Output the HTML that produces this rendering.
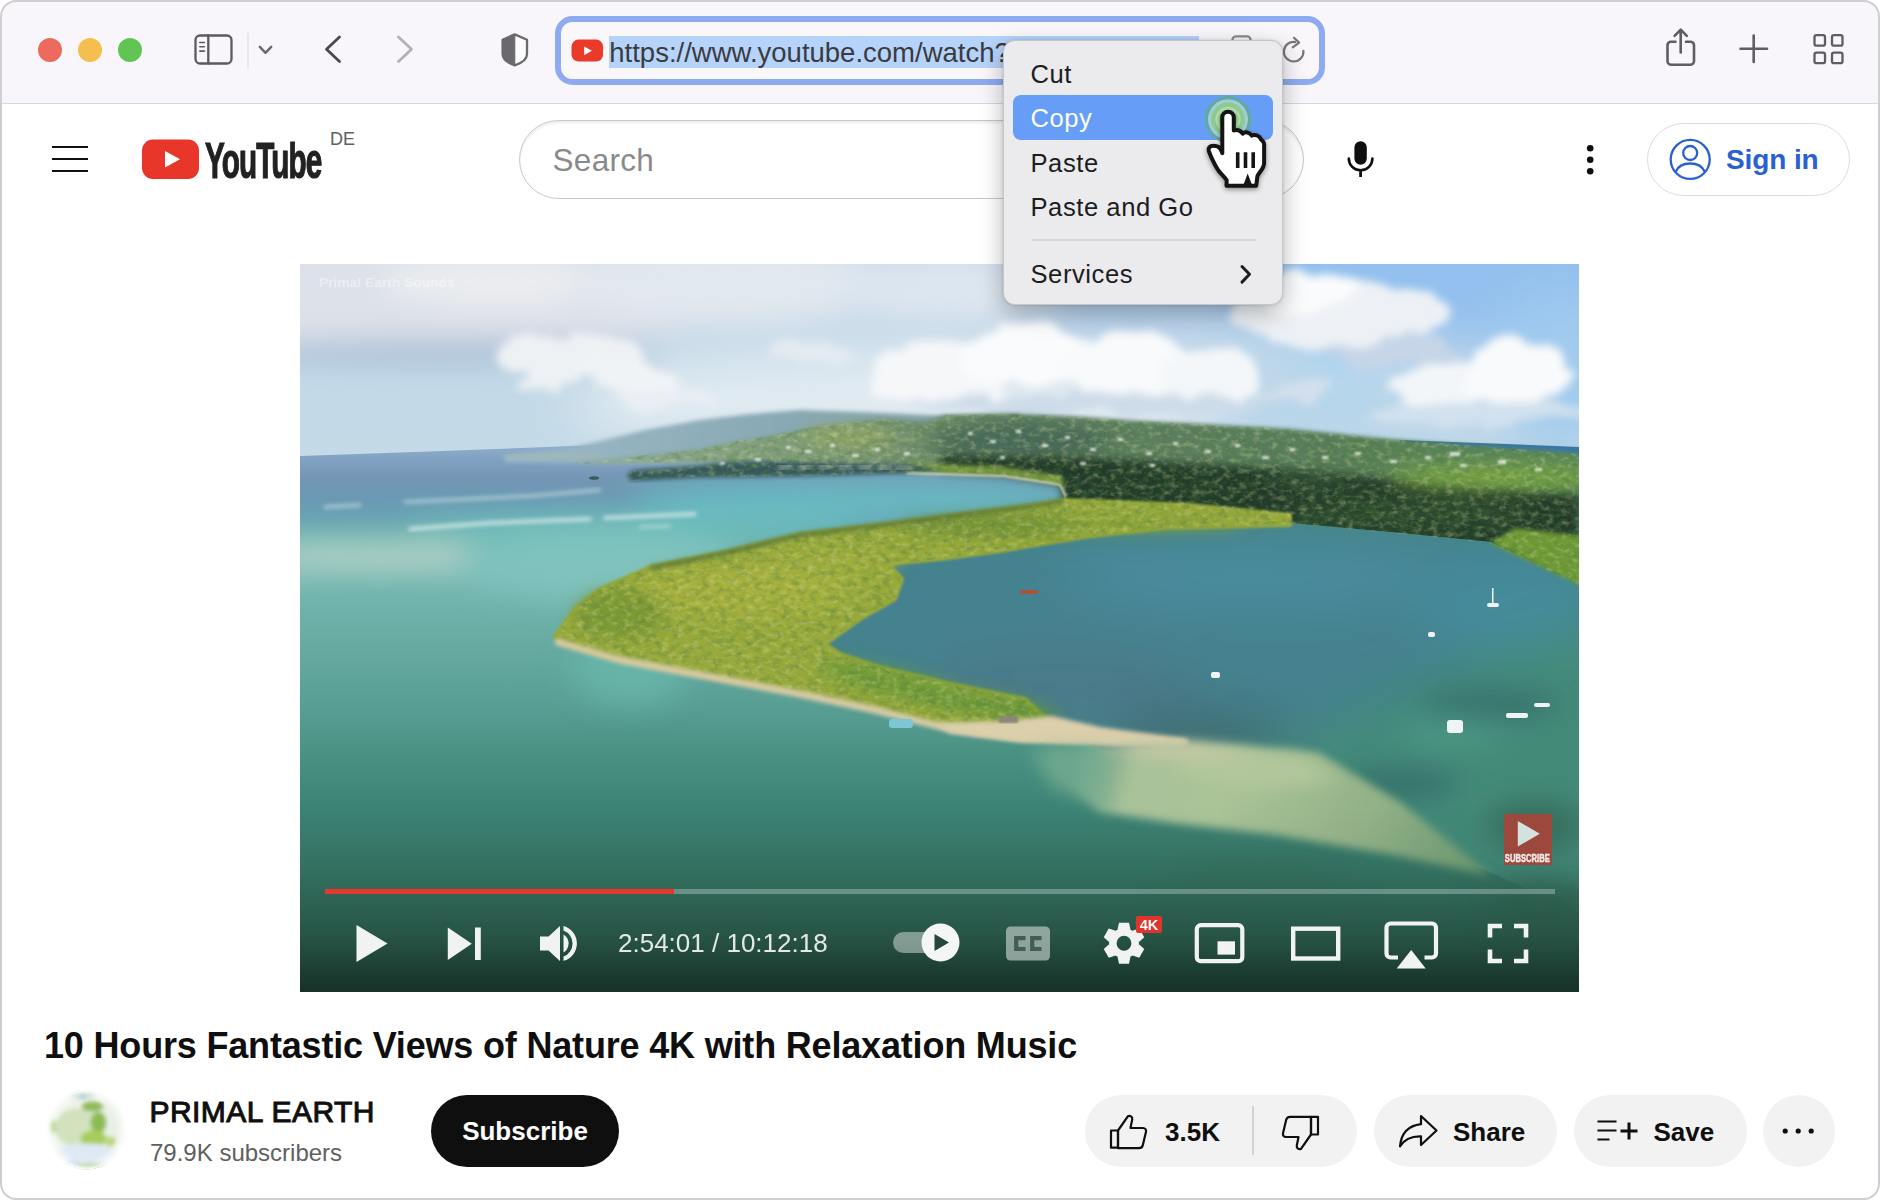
<!DOCTYPE html>
<html lang="en">
<head>
<meta charset="utf-8">
<title>YouTube – Safari</title>
<style>
*{box-sizing:border-box;margin:0;padding:0}
html,body{width:1880px;height:1200px;background:#fff;overflow:hidden}
body{font-family:"Liberation Sans",sans-serif;position:relative;color:#0f0f0f}
.abs{position:absolute}
#win{position:absolute;left:0;top:0;width:1880px;height:1200px;border-radius:17px;background:#fff;overflow:hidden}
#frame{position:absolute;left:0;top:0;width:1880px;height:1200px;border:2.200px solid #cfced0;border-radius:16.500px;pointer-events:none;z-index:50}
#toolbar{position:absolute;left:0;top:0;width:1880px;height:104px;background:#f8f6fa;border-bottom:1.200px solid #d9d7da}
.tl{position:absolute;top:38px;width:24px;height:24px;border-radius:50%}
svg{position:absolute;overflow:visible}
#urlbar{position:absolute;left:555px;top:16px;width:770px;height:69px;border:6.900px solid #8eabf2;border-radius:17.500px;background:#f9f7fa}
#sel{position:absolute;left:609px;top:35.5px;width:590px;height:32px;background:#b5d3fb}
#url{position:absolute;left:609.300px;top:35.500px;font-size:27.500px;line-height:34px;color:#3b3b3d;white-space:nowrap;letter-spacing:0}
/* yt header */
#ytlogo-text{position:absolute;left:205px;top:133px;font-weight:bold;font-size:49.5px;line-height:56px;color:#212121;-webkit-text-stroke:1.2px #212121;transform-origin:0 0;transform:scaleX(.6);letter-spacing:-1.5px;white-space:nowrap}
#de{position:absolute;left:330px;top:129px;font-size:18px;line-height:20px;color:#606060}
#search{position:absolute;left:519px;top:120px;width:785px;height:79px;border:1.5px solid #c8c8c8;border-radius:40px;background:#fff;box-shadow:inset 0 2px 3px rgba(0,0,0,.08)}
#search span{position:absolute;left:32.5px;top:19.5px;letter-spacing:.3px;font-size:31.5px;line-height:38px;color:#8a8a8a}
#signin{position:absolute;left:1647px;top:123px;width:203px;height:73px;border:1.5px solid #dcdcdc;border-radius:37px;background:#fff}
#signin span{position:absolute;left:78px;top:18px;font-size:28px;line-height:36px;font-weight:bold;color:#2a60d2;white-space:nowrap;letter-spacing:-.1px}
/* menu */
#menu{position:absolute;left:1003px;top:40px;width:280px;height:265px;border-radius:12px;background:#ebebed;border:1px solid #c6c6c8;box-shadow:0 8px 24px rgba(0,0,0,.28),0 0 3px rgba(0,0,0,.15)}
#menu .it{position:absolute;left:26.500px;font-size:25.600px;line-height:32px;letter-spacing:.55px;color:#1d1d1f;white-space:nowrap}
#menu .hl{position:absolute;left:9px;top:54px;width:260px;height:45px;border-radius:8px;background:#659df7}
#menu .sep{position:absolute;left:28px;top:198px;width:224px;height:2px;background:#d4d4d4}
/* video */
#video{position:absolute;left:300px;top:264px;width:1279.300px;height:727.700px;overflow:hidden;background:#2c5f50}
#wm{position:absolute;left:19px;top:11px;font-size:13.600px;font-weight:bold;color:rgba(255,255,255,.42);letter-spacing:.1px;white-space:nowrap}
#time{position:absolute;left:318px;top:663px;font-size:26px;line-height:32px;color:#e4e8e6;white-space:nowrap}
/* bottom */
#title{position:absolute;left:44px;top:1024px;letter-spacing:-.18px;font-size:36px;line-height:44px;font-weight:bold;color:#0f0f0f;white-space:nowrap}
#chan{position:absolute;left:149.5px;top:1092.5px;letter-spacing:.45px;font-size:30px;line-height:38px;color:#0f0f0f;white-space:nowrap;-webkit-text-stroke:1px #0f0f0f}
#subs{position:absolute;left:150px;top:1138px;font-size:24px;line-height:30px;color:#606060;white-space:nowrap}
#subbtn{position:absolute;left:431px;top:1095px;width:188px;height:72px;border-radius:36px;background:#0f0f0f;color:#fff;font-weight:bold;font-size:26px;line-height:72px;text-align:center}
.pill{position:absolute;top:1095px;height:72px;border-radius:36px;background:#f2f2f2}
.pill span{position:absolute;top:20px;font-size:26px;line-height:34px;font-weight:bold;color:#0f0f0f;white-space:nowrap}
</style>
</head>
<body>
<div id="win">
<div id="toolbar">
<div class="tl" style="left:38px;background:#ec6a5e"></div>
<div class="tl" style="left:78px;background:#f4bf4f"></div>
<div class="tl" style="left:118px;background:#61c554"></div>
<!-- sidebar icon -->
<svg style="left:190px;top:30px" width="50" height="40" viewBox="190 30 50 40" fill="none" stroke="#5c5a5e" stroke-width="2.3" stroke-linecap="round" stroke-linejoin="round">
<rect x="195.5" y="35.5" width="36" height="28" rx="4.5"/><path d="M208.3 35.5V63.5"/><path d="M199.8 42.5h4.6M199.8 46.8h4.6M199.8 51.1h4.6" stroke-width="1.6"/></svg>
<div class="abs" style="left:247px;top:33px;width:1.5px;height:35px;background:#eae8eb"></div>
<svg style="left:255px;top:40px" width="22" height="20" viewBox="255 40 22 20" fill="none" stroke="#6a686c" stroke-width="2.4" stroke-linecap="round" stroke-linejoin="round"><path d="M259.8 46.8l5.7 6 5.7-6"/></svg>
<!-- back / forward -->
<svg style="left:320px;top:30px" width="100" height="40" viewBox="320 30 100 40" fill="none" stroke-width="2.8" stroke-linecap="round" stroke-linejoin="round"><path d="M339.5 37L326.5 49.3l13 12.3" stroke="#4b494d"/><path d="M398.5 37l13 12.3-13 12.3" stroke="#b3b1b5"/></svg>
<!-- shield -->
<svg style="left:498px;top:30px" width="34" height="40" viewBox="498 30 34 40"><path d="M514.800 34.400L527 39.700V54C527 59.500 521.800 63 514.800 65.300C507.800 63 502.600 59.500 502.600 54V39.700Z" fill="#fdfcfd" stroke="#6b696d" stroke-width="2.300" stroke-linejoin="round"/><path d="M514.800 34.400V65.300C507.800 63 502.600 59.500 502.600 54V39.700Z" fill="#6b696d" stroke="#6b696d" stroke-width="1" stroke-linejoin="round"/></svg>
<!-- url bar -->
<div id="urlbar"></div>
<svg style="left:571px;top:38px" width="33" height="25" viewBox="0 0 33 25"><rect x=".500" y="1.600" width="31.600" height="22" rx="7" fill="#e93a2a"/><path d="M13.200 8.400v8.800l7.700-4.400z" fill="#fff"/></svg>
<div id="sel"></div>
<div id="url">https://www.youtube.com/watch?v=Qj1vW3VzLmk</div>
<!-- hidden reader icon + reload -->
<svg style="left:1228px;top:30px" width="30" height="20" viewBox="1228 30 30 20" fill="none" stroke="#8a888d" stroke-width="2.200"><rect x="1232.500" y="36.300" width="18" height="16" rx="3.500"/></svg>
<svg style="left:1278px;top:32px" width="32" height="34" viewBox="1278 32 32 34" fill="none" stroke="#78767b" stroke-width="2.200" stroke-linecap="round" stroke-linejoin="round"><path d="M1303.400 50.800A9.800 9.800 0 1 1 1295.300 42.050"/><path d="M1294 37.700L1299.100 42.600L1292.800 47.400"/></svg>
<!-- share, plus, grid -->
<svg style="left:1660px;top:25px" width="190" height="45" viewBox="1660 25 190 45" fill="none" stroke="#5f5d61" stroke-width="2.600" stroke-linecap="round" stroke-linejoin="round">
<path d="M1675.500 41.700h-4.500a3.500 3.500 0 0 0-3.500 3.500v16a3.500 3.500 0 0 0 3.500 3.500h19.500a3.500 3.500 0 0 0 3.500-3.500v-16a3.500 3.500 0 0 0-3.500-3.500h-4.500"/><path d="M1680.700 52.500V30M1674.600 35.800l6.100-6.100 6.100 6.100"/>
<path d="M1740.500 48.800h26.500M1753.700 35.500v26.500"/>
<g stroke-width="2.300"><rect x="1814.500" y="35.200" width="10.500" height="10.500" rx="2"/><rect x="1832" y="35.200" width="10.500" height="10.500" rx="2"/><rect x="1814.500" y="52.700" width="10.500" height="10.500" rx="2"/><rect x="1832" y="52.700" width="10.500" height="10.500" rx="2"/></g>
</svg>
</div>
<!-- hamburger -->
<div class="abs" style="left:52px;top:145.500px;width:36px;height:2.200px;background:#0f0f0f"></div>
<div class="abs" style="left:52px;top:157.500px;width:36px;height:2.200px;background:#0f0f0f"></div>
<div class="abs" style="left:52px;top:169.500px;width:36px;height:2.200px;background:#0f0f0f"></div>
<!-- logo -->
<svg style="left:142px;top:139px" width="58" height="41" viewBox="0 0 58 41"><rect x="0" y="0.500" width="57" height="39.500" rx="11" fill="#e9362a"/><path d="M23 12v16.500l15-8.250z" fill="#fff"/></svg>
<div id="ytlogo-text">YouTube</div>
<div id="de">DE</div>
<div id="search"><span>Search</span></div>
<!-- mic -->
<svg style="left:1340px;top:135px" width="42" height="48" viewBox="1340 135 42 48" fill="none" stroke="#0f0f0f" stroke-linecap="round"><rect x="1354.400" y="141.300" width="12.400" height="23.500" rx="6.200" fill="#0f0f0f" stroke="none"/><path d="M1348.800 158.500a11.800 11.800 0 0 0 23.600 0" stroke-width="2.600"/><path d="M1360.600 170.500v6.500" stroke-width="2.800" stroke-linecap="butt"/></svg>
<!-- dots -->
<svg style="left:1580px;top:140px" width="20" height="40" viewBox="1580 140 20 40" fill="#0f0f0f"><circle cx="1590.200" cy="148.300" r="3.300"/><circle cx="1590.200" cy="159.700" r="3.300"/><circle cx="1590.200" cy="171.200" r="3.300"/></svg>
<div id="signin"><span>Sign in</span></div>
<svg style="left:1665px;top:135px" width="50" height="50" viewBox="1665 135 50 50" fill="none" stroke="#2a60d2" stroke-width="2.300"><circle cx="1690.200" cy="159.400" r="19.500"/><circle cx="1690.200" cy="153" r="7"/><path d="M1675.500 172c2.500-6 8-8.500 14.700-8.500s12.200 2.500 14.700 8.500"/></svg>

<div id="video">
<svg style="left:0;top:0" width="1280" height="728" viewBox="0 0 1280 728" preserveAspectRatio="none">
<defs>
<linearGradient id="gsky" x1="0" y1="0" x2="0" y2="1"><stop offset="0" stop-color="#c9d8ea"/><stop offset=".5" stop-color="#c3d9e8"/><stop offset="1" stop-color="#c4dae7"/></linearGradient>
<linearGradient id="gsea" gradientUnits="userSpaceOnUse" x1="0" y1="180" x2="0" y2="728">
<stop offset="0" stop-color="#8eaecd"/><stop offset=".035" stop-color="#7f9fc0"/><stop offset=".065" stop-color="#7396b5"/><stop offset=".1" stop-color="#6b99b3"/><stop offset=".135" stop-color="#69a3b3"/><stop offset=".17" stop-color="#70b3b0"/><stop offset=".25" stop-color="#76b8b2"/><stop offset=".3" stop-color="#6fb2ab"/><stop offset=".38" stop-color="#65a9a0"/><stop offset=".47" stop-color="#5a9f95"/><stop offset=".56" stop-color="#4b9284"/><stop offset=".65" stop-color="#3e8577"/><stop offset=".78" stop-color="#367565"/><stop offset="1" stop-color="#35705a"/></linearGradient>
<linearGradient id="gfar" x1="0" y1="0" x2="1" y2="0"><stop offset="0" stop-color="#9db9c6"/><stop offset=".5" stop-color="#8aaab6"/><stop offset="1" stop-color="#7d9f9c"/></linearGradient>
<linearGradient id="gmain" gradientUnits="userSpaceOnUse" x1="275" y1="0" x2="1279" y2="0"><stop offset="0" stop-color="#8cab93"/><stop offset=".25" stop-color="#7d9a76"/><stop offset=".45" stop-color="#5f8062"/><stop offset=".75" stop-color="#587d5a"/><stop offset="1" stop-color="#5a8756"/></linearGradient>
<linearGradient id="gctl" x1="0" y1="0" x2="0" y2="1"><stop offset="0" stop-color="#000" stop-opacity="0"/><stop offset=".35" stop-color="#000" stop-opacity=".04"/><stop offset=".7" stop-color="#000" stop-opacity=".26"/><stop offset="1" stop-color="#000" stop-opacity=".56"/></linearGradient>
<filter id="b1" x="-10%" y="-10%" width="120%" height="120%"><feGaussianBlur stdDeviation=".8"/></filter>
<filter id="b2" x="-10%" y="-10%" width="120%" height="120%"><feGaussianBlur stdDeviation="2"/></filter>
<filter id="b4" x="-10%" y="-10%" width="120%" height="120%"><feGaussianBlur stdDeviation="4"/></filter>
<filter id="b8" x="-20%" y="-20%" width="140%" height="140%"><feGaussianBlur stdDeviation="8"/></filter>
<filter id="b14" x="-30%" y="-30%" width="160%" height="160%"><feGaussianBlur stdDeviation="14"/></filter>
<filter id="b25" x="-40%" y="-40%" width="180%" height="180%"><feGaussianBlur stdDeviation="25"/></filter>
<filter id="texd" x="0" y="0" width="100%" height="100%"><feTurbulence type="fractalNoise" baseFrequency=".11 .16" numOctaves="3" seed="7"/><feColorMatrix type="matrix" values="0 0 0 0 0.08  0 0 0 0 0.2  0 0 0 0 0.05  2.6 0 0 0 -1.15"/></filter>
<filter id="texl" x="0" y="0" width="100%" height="100%"><feTurbulence type="fractalNoise" baseFrequency=".13 .19" numOctaves="3" seed="23"/><feColorMatrix type="matrix" values="0 0 0 0 0.8  0 0 0 0 0.82  0 0 0 0 0.4  0 2.4 0 0 -1.12"/></filter>
<filter id="cl" x="-20%" y="-30%" width="140%" height="160%"><feTurbulence type="fractalNoise" baseFrequency=".022 .035" numOctaves="3" seed="11" result="n"/><feDisplacementMap in="SourceGraphic" in2="n" scale="34" xChannelSelector="R" yChannelSelector="G"/><feGaussianBlur stdDeviation="4.500"/></filter>
<clipPath id="vclip"><rect width="1280" height="728"/></clipPath>
</defs>
<g clip-path="url(#vclip)">
<!-- SKY -->
<rect width="1282" height="200" fill="url(#gsky)"/>
<g filter="url(#b25)">
<ellipse cx="1150" cy="5" rx="300" ry="75" fill="#93c0ee"/>
<ellipse cx="1260" cy="110" rx="70" ry="80" fill="#a2cbee"/>
<ellipse cx="820" cy="35" rx="110" ry="35" fill="#aecdec"/>
<ellipse cx="1020" cy="150" rx="220" ry="22" fill="#b4d3ea"/>
<ellipse cx="600" cy="140" rx="330" ry="55" fill="#e0eaf1"/>
<ellipse cx="1040" cy="100" rx="45" ry="28" fill="#b4d8ee"/>
</g>
<!-- clouds -->
<g filter="url(#b14)">
<ellipse cx="150" cy="30" rx="270" ry="62" fill="#dde1e9"/>
<ellipse cx="200" cy="18" rx="120" ry="22" fill="#ebedf0"/>
<ellipse cx="430" cy="20" rx="160" ry="40" fill="#e2e8ef"/>
<ellipse cx="140" cy="88" rx="225" ry="12" fill="#a9bed5"/>
<ellipse cx="650" cy="25" rx="120" ry="30" fill="#dde6ef"/>
</g>
<g filter="url(#cl)">
<ellipse cx="270" cy="92" rx="75" ry="26" fill="#eef1f4"/>
<ellipse cx="330" cy="112" rx="50" ry="18" fill="#f0f3f6"/>
<ellipse cx="370" cy="136" rx="50" ry="10" fill="#e9eff4"/>
<ellipse cx="510" cy="92" rx="40" ry="12" fill="#e4ebf2"/>
<ellipse cx="640" cy="108" rx="75" ry="30" fill="#f5f7f9"/>
<ellipse cx="730" cy="92" rx="70" ry="32" fill="#fafbfc"/>
<ellipse cx="830" cy="100" rx="70" ry="34" fill="#f8fafb"/>
<ellipse cx="910" cy="112" rx="50" ry="26" fill="#f4f7f9"/>
<ellipse cx="780" cy="140" rx="180" ry="11" fill="#cddbe9"/>
<ellipse cx="1040" cy="52" rx="115" ry="34" fill="#edf1f5"/>
<ellipse cx="1010" cy="26" rx="45" ry="20" fill="#fafbfc"/>
<ellipse cx="1090" cy="88" rx="70" ry="13" fill="#c6d6e8"/>
<ellipse cx="1140" cy="122" rx="50" ry="24" fill="#f3f6f9"/>
<ellipse cx="1218" cy="108" rx="55" ry="32" fill="#f9fafb"/>
<ellipse cx="1180" cy="150" rx="115" ry="11" fill="#d2e1ee"/>
<ellipse cx="990" cy="128" rx="40" ry="10" fill="#d3e0ec"/>
</g>
<!-- SEA -->
<path d="M0 192Q150 187 300 181L700 175L1282 186V728H0Z" fill="url(#gsea)"/>
<path d="M1100 176L1282 183V194L1100 189Z" fill="#3574ab"/>
<g filter="url(#b14)">
<ellipse cx="560" cy="236" rx="230" ry="20" fill="#68b9c1"/>
<ellipse cx="330" cy="264" rx="230" ry="14" fill="#6cbcba"/>
<ellipse cx="80" cy="293" rx="200" ry="13" fill="#b8d4c9"/>
<ellipse cx="330" cy="400" rx="60" ry="40" fill="#66b3a8"/>
<ellipse cx="300" cy="300" rx="140" ry="34" fill="#80c2be"/>
</g>
<g filter="url(#b2)" stroke="#e4f1ef" stroke-linecap="round" fill="none">
<path d="M25 243L60 241M105 238L230 232L300 226" stroke-width="2.500" stroke-opacity=".7"/>
<path d="M110 265L190 259L290 255M305 254L395 250" stroke-width="3.500" stroke-opacity=".85"/>
<path d="M340 263L370 262" stroke-width="2.500" stroke-opacity=".6"/>
</g>
<!-- far hills -->
<path d="M205 191L270 184L300 177L345 166L400 156L450 150L500 146L560 148L650 152L720 150L720 205L205 198Z" fill="url(#gfar)" filter="url(#b2)"/>
<!-- mainland -->
<path d="M275 199L330 193L400 185L442 176L470 172L519 162L581 155L627 158L645 151L715 150L780 153L840 157L920 161L990 165L1090 175L1140 179L1280 190V340H740L764 234L760 220L705 211.500L640 207L612 202L473 198L430 198L330 198.500L275 200Z" fill="url(#gmain)" filter="url(#b2)"/>
<g filter="url(#b8)">
<ellipse cx="550" cy="173" rx="45" ry="9" fill="#95a868"/>
<ellipse cx="720" cy="176" rx="90" ry="16" fill="#46685a"/>
<ellipse cx="1190" cy="200" rx="110" ry="8" fill="#628d58"/>
</g>
<!-- dark forest -->
<path d="M640 190L700 192L780 193L860 198L950 203L1040 210L1100 216L1160 221L1280 230V300H740L764 234L760 220L705 211L640 207Z" fill="#213a2b" filter="url(#b4)"/>
<g filter="url(#b8)">
<ellipse cx="1195" cy="214" rx="105" ry="10" fill="#7aa640"/>
<ellipse cx="1010" cy="216" rx="40" ry="5" fill="#36563a"/>
<ellipse cx="860" cy="222" rx="90" ry="10" fill="#223c2c"/>
<ellipse cx="1110" cy="250" rx="120" ry="14" fill="#2a4a2e"/>
</g>
<!-- strip above bay beach -->
<path d="M610 199L700 203L762 212L764 222L704 211L606 208Z" fill="#7a9c3c" filter="url(#b2)"/>
<!-- dark headland in bay -->
<path d="M327 210L334 206L396 202L427 198L473 197L612 201L645 206L606 209.500L488 212.500L396 213.500L331 217Z" fill="#34585a" filter="url(#b2)"/>
<path d="M478 203L540 202L612 205" stroke="#9eaaa8" stroke-width="5" fill="none" filter="url(#b2)" stroke-opacity=".75" stroke-dasharray="14 6"/>
<ellipse cx="294" cy="214" rx="5" ry="1.800" fill="#3a5a5c"/>
<path d="M205 192L260 191L300 193" stroke="#a4b8ad" stroke-width="3" fill="none" filter="url(#b2)"/>
<path d="M606 209L704 212L760 220.500L766 233" stroke="#e6dfc4" stroke-width="2.200" fill="none" filter="url(#b1)" stroke-opacity=".9"/>
<!-- lagoon -->
<clipPath id="lagclip"><path d="M560 310L640 290L700 284L790 270L865 262L990 259L1090 268L1190 278L1282 320V650L1185 606L1000 540L750 470L725 435L650 420L575 402L540 390L525 380L560 355L595 335Z"/></clipPath>
<g clip-path="url(#lagclip)">
<rect x="500" y="250" width="800" height="420" fill="#448a79"/>
<g filter="url(#b25)">
<path d="M500 250H1300V350L1120 420L1010 470L860 500L700 470L500 400Z" fill="#45828f"/>
<ellipse cx="760" cy="420" rx="140" ry="40" fill="#4b7a8a"/>
<ellipse cx="1210" cy="340" rx="90" ry="45" fill="#458b9b"/>
<ellipse cx="900" cy="470" rx="90" ry="24" fill="#3f6a70"/>
<ellipse cx="950" cy="312" rx="190" ry="30" fill="#4b8c9f"/>
</g>
<g filter="url(#b14)">
<ellipse cx="1190" cy="440" rx="70" ry="13" fill="#356f6c"/>
<ellipse cx="1100" cy="520" rx="60" ry="15" fill="#35706a"/>
<ellipse cx="1235" cy="560" rx="50" ry="26" fill="#377160"/>
<ellipse cx="1150" cy="470" rx="50" ry="11" fill="#4f9a88"/>
</g>
</g>
<g filter="url(#b14)"><ellipse cx="960" cy="612" rx="100" ry="12" fill="#356f5d"/><ellipse cx="1240" cy="640" rx="60" ry="28" fill="#366e5c"/></g>
<!-- peninsula bright green -->
<path d="M1282 272L1215 264L1190 279L1282 322Z" fill="#6e9a35" filter="url(#b2)"/>
<path d="M990 251L890 241L764 236L740 240L600 258L500 270L425 288L350 303L300 325L275 345L255 372L262 380L320 396L400 411L500 429L575 444L650 463L750 471L760 470L750 458L725 435L650 420L575 402L540 390L525 380L560 355L595 335L602 315L588 300L640 295L700 287L790 272L865 264L990 261Z" fill="#97a93a" stroke="#97a93a" stroke-width="4" stroke-linejoin="round" filter="url(#b1)"/>
<g filter="url(#b8)">
<ellipse cx="440" cy="328" rx="110" ry="26" fill="#a5b03d"/>
<ellipse cx="320" cy="350" rx="45" ry="24" fill="#7d9a35"/>
<ellipse cx="520" cy="298" rx="80" ry="12" fill="#a0ad3c"/>
<ellipse cx="610" cy="424" rx="95" ry="13" fill="#6d9a38" transform="rotate(14 610 424)"/>
<ellipse cx="705" cy="444" rx="55" ry="10" fill="#659538" transform="rotate(12 705 444)"/>
<ellipse cx="800" cy="258" rx="150" ry="7" fill="#89a238"/>
<ellipse cx="690" cy="262" rx="90" ry="7" fill="#668a36"/>
</g>
<clipPath id="landclip"><path d="M990 251L890 241L764 236L740 240L600 258L500 270L425 288L350 303L300 325L275 345L255 372L262 380L320 396L400 411L500 429L575 444L650 463L750 471L760 470L750 458L725 435L650 420L575 402L540 390L525 380L560 355L595 335L602 315L588 300L640 295L700 287L790 272L865 264L990 261Z"/><path d="M275 199L330 193L400 185L442 176L470 172L519 162L581 155L627 158L645 151L715 150L780 153L840 157L920 161L990 165L1090 175L1140 179L1280 190V322L1190 279L1090 269L990 260L990 251L890 241L764 236L764 234L760 220L705 211.500L640 207L612 202L473 198L430 198L330 198.500L275 200Z"/><path d="M327 210L334 206L396 202L427 198L473 197L612 201L645 206L606 209.500L488 212.500L396 213.500L331 217Z"/></clipPath>
<g clip-path="url(#landclip)"><rect x="250" y="140" width="1030" height="340" filter="url(#texd)" opacity=".42"/><rect x="250" y="140" width="1030" height="340" filter="url(#texl)" opacity=".32"/></g>
<!-- houses -->
<g fill="#e9ece6" opacity=".85" filter="url(#b1)">
<rect x="486" y="182" width="5" height="3"/><rect x="505" y="186" width="6" height="3"/><rect x="530" y="180" width="5" height="3"/><rect x="552" y="190" width="7" height="3"/><rect x="575" y="184" width="5" height="3"/><rect x="604" y="188" width="6" height="3"/><rect x="455" y="194" width="6" height="3"/><rect x="420" y="198" width="5" height="2.500"/>
<rect x="668" y="168" width="5" height="3"/><rect x="690" y="176" width="6" height="3"/><rect x="716" y="166" width="5" height="3"/><rect x="742" y="180" width="6" height="3"/><rect x="765" y="172" width="5" height="3"/><rect x="790" y="184" width="6" height="3"/><rect x="818" y="174" width="5" height="3"/><rect x="846" y="188" width="6" height="3"/><rect x="873" y="178" width="5" height="3"/><rect x="905" y="186" width="6" height="3"/><rect x="935" y="180" width="5" height="3"/><rect x="962" y="192" width="7" height="3"/><rect x="990" y="184" width="5" height="3"/><rect x="1022" y="192" width="6" height="3"/><rect x="1055" y="188" width="6" height="3"/><rect x="1090" y="196" width="7" height="3"/><rect x="1125" y="192" width="6" height="3"/><rect x="1160" y="200" width="7" height="3"/><rect x="1198" y="196" width="8" height="4"/><rect x="1235" y="204" width="7" height="3"/><rect x="1150" y="188" width="10" height="4"/><rect x="700" y="192" width="5" height="3"/><rect x="780" y="198" width="6" height="3"/><rect x="850" y="200" width="5" height="3"/>
</g>
<path d="M764 237L740 241L600 259L500 271L425 289L350 304" stroke="#4f6e3a" stroke-width="4.500" fill="none" filter="url(#b2)" stroke-opacity=".8"/>
<!-- beach -->
<path d="M258 378L320 396L400 411L500 430L575 446L650 465L720 474L800 476L885 480" stroke="#d8cba8" stroke-width="7" fill="none" stroke-linecap="round" filter="url(#b2)"/>
<path d="M636 459L700 457L752 452L800 463L888 475L884 482L800 481L720 478L650 469Z" fill="#dccfab" filter="url(#b2)"/>
<rect x="699" y="452" width="19" height="7" fill="#8d8676" filter="url(#b1)"/>
<!-- sandbar -->
<linearGradient id="gsand" gradientUnits="userSpaceOnUse" x1="780" y1="480" x2="1190" y2="610"><stop offset="0" stop-color="#a9c29a" stop-opacity=".15"/><stop offset=".14" stop-color="#a9c29a" stop-opacity="1"/><stop offset=".35" stop-color="#aac397"/><stop offset=".7" stop-color="#92b188"/><stop offset="1" stop-color="#6a9a70"/></linearGradient>
<path d="M748 482L890 478L1019 489L1100 538L1192 612L1100 592L977 571L881 560L800 548L752 510Z" fill="url(#gsand)" filter="url(#b4)"/>
<g filter="url(#b8)">
<path d="M730 486L800 482L810 546L750 524Z" fill="#7fb596" opacity=".55"/>
<path d="M880 484L1000 492L1040 518L950 526L880 510Z" fill="#b2c69b"/>
<path d="M790 480L890 481L960 488L860 492Z" fill="#d2cbaa"/>
</g>
<!-- boats -->
<g fill="#f0f3f3"><rect x="911" y="408" width="9" height="6" rx="2"/><rect x="1128" y="368" width="7" height="5" rx="2"/><rect x="1147" y="456" width="16" height="13" rx="3"/><rect x="1206" y="449" width="22" height="5" rx="2"/><rect x="1234" y="439" width="16" height="4" rx="2"/><rect x="1187" y="339" width="12" height="4" rx="2"/><rect x="1192" y="324" width="1.500" height="16"/></g>
<rect x="720" y="326" width="18" height="4" rx="1.500" fill="#a6523e"/>
<rect x="589" y="455" width="24" height="9" rx="3" fill="#7cc6d6"/>
<!-- controls gradient -->
<rect x="0" y="540" width="1282" height="188" fill="url(#gctl)"/>
</g>
</svg>
<div id="wm">Primal Earth Sounds</div>
<!-- subscribe watermark -->
<div class="abs" style="left:1203.500px;top:550px;width:48.500px;height:50.500px;background:#9d483d"></div>
<svg style="left:1203px;top:550px" width="50" height="50" viewBox="0 0 50 50"><path d="M14.800 7v25.500l22-12.750z" fill="#d3e2de"/><text x="24.300" y="48" font-family="Liberation Sans, sans-serif" font-weight="bold" font-size="11.500" fill="#f3e9e6" stroke="#f3e9e6" stroke-width=".5" text-anchor="middle" textLength="45" lengthAdjust="spacingAndGlyphs">SUBSCRIBE</text></svg>
<!-- progress -->
<div class="abs" style="left:25px;top:624.500px;width:1230px;height:5.500px;background:rgba(255,255,255,.28)"></div>
<div class="abs" style="left:25px;top:624.500px;width:349px;height:5.500px;background:#e8372c"></div>
<!-- left controls -->
<svg style="left:0;top:640px" width="1279" height="80" viewBox="300 904 1279 80">
<g fill="#f1f3f2">
<path d="M356.500 925v37l31-18.500z"/>
<path d="M447.800 927.500v32.500l24-16.250zM475 927.500h5.800v32.500h-5.800z"/>
<path d="M540 936.500h8.500l11.500-10.500v35l-11.500-10.500h-8.500z"/>
<path d="M563.500 934.500a10.500 10.500 0 0 1 0 18z"/>
<path d="M563.500 926.200v4.200a14 14 0 0 1 0 26.200v4.200a18 18 0 0 0 0-34.800z"/>
</g>
<!-- autoplay toggle -->
<rect x="893" y="932" width="58" height="21" rx="10.500" fill="#fff" fill-opacity=".42"/>
<circle cx="940.500" cy="942.500" r="19" fill="#f4f6f5"/>
<path d="M934.500 934v17l14.500-8.500z" fill="#24463c"/>
<!-- cc -->
<rect x="1006" y="926.500" width="44" height="34" rx="4.500" fill="#cfd6d3" fill-opacity=".62"/>
<g fill="none" stroke="#3f5f55" stroke-width="4.200"><path d="M1025.500 938.200h-9.300v10.800h9.300M1041.500 938.200h-9.300v10.800h9.300"/></g>
<!-- gear -->
<g transform="translate(1124 943.200)" fill="#f1f3f2">
<path id="tooth" d="M-5 -20.500h10l1.500 7h-13z"/>
<use href="#tooth" transform="rotate(60)"/><use href="#tooth" transform="rotate(120)"/><use href="#tooth" transform="rotate(180)"/><use href="#tooth" transform="rotate(240)"/><use href="#tooth" transform="rotate(300)"/>
<circle r="11.200" fill="none" stroke="#f1f3f2" stroke-width="7.500"/>
</g>
<rect x="1136" y="916" width="26" height="17" rx="2" fill="#e0352b"/>
<text x="1149" y="930" font-family="Liberation Sans, sans-serif" font-weight="bold" font-size="14.500" fill="#fff" text-anchor="middle">4K</text>
<!-- miniplayer -->
<rect x="1196.800" y="925.200" width="45.500" height="36" rx="4" fill="none" stroke="#f1f3f2" stroke-width="4.200"/>
<rect x="1217.500" y="941.300" width="17.500" height="13.300" fill="#f1f3f2"/>
<!-- theater -->
<rect x="1293.200" y="928.700" width="45" height="29.800" fill="none" stroke="#f1f3f2" stroke-width="4.400"/>
<!-- airplay -->
<path d="M1398 957.500h-7.500a4 4 0 0 1-4-4v-26a4 4 0 0 1 4-4h41.500a4 4 0 0 1 4 4v26a4 4 0 0 1-4 4h-7.500" fill="none" stroke="#f1f3f2" stroke-width="4.200"/>
<path d="M1411.200 950l14.500 18.500h-29z" fill="#f1f3f2"/>
<!-- fullscreen -->
<path d="M1490 937.500v-11.500h12M1514 926h12v11.500M1526 949.500v11.500h-12M1502 961h-12v-11.500" fill="none" stroke="#f1f3f2" stroke-width="4.600"/>
</svg>
<div id="time">2:54:01 / 10:12:18</div>

</div>

<div id="title">10 Hours Fantastic Views of Nature 4K with Relaxation Music</div>
<!-- avatar -->
<svg style="left:46px;top:1089px" width="81" height="81" viewBox="-40.500 -40.500 81 81">
<defs><clipPath id="avc"><circle r="40"/></clipPath><filter id="avb" x="-30%" y="-30%" width="160%" height="160%"><feGaussianBlur stdDeviation="2.200"/></filter>
<radialGradient id="avfade" cx="0" cy="0" r="40" gradientUnits="userSpaceOnUse"><stop offset="0" stop-color="#fff" stop-opacity="0"/><stop offset=".72" stop-color="#fff" stop-opacity="0"/><stop offset=".9" stop-color="#fff" stop-opacity=".55"/><stop offset="1" stop-color="#fff" stop-opacity="1"/></radialGradient></defs>
<g clip-path="url(#avc)"><circle r="40" fill="#eef3ea"/>
<g filter="url(#avb)">
<ellipse cx="-9" cy="-2" rx="23" ry="19" fill="#d2e2bd"/>
<ellipse cx="22" cy="-6" rx="14" ry="22" fill="#e9f0e6"/>
<ellipse cx="6" cy="-23" rx="11" ry="5" fill="#8fba58"/>
<ellipse cx="12" cy="-7" rx="8" ry="11" fill="#8dbb52"/>
<ellipse cx="7" cy="9" rx="13" ry="8" fill="#a8cd5c"/>
<ellipse cx="24" cy="12" rx="6" ry="5" fill="#b9d878"/>
<ellipse cx="-34" cy="-3" rx="3" ry="7" fill="#a0c566"/>
<ellipse cx="0" cy="24" rx="32" ry="10" fill="#dfe9f4"/>
<ellipse cx="-14" cy="34" rx="8" ry="3" fill="#a5c6e4"/>
<ellipse cx="5" cy="37" rx="17" ry="3.500" fill="#82b153"/>
<ellipse cx="-4" cy="-35" rx="13" ry="4" fill="#b5d2c2"/>
<ellipse cx="-4" cy="-34" rx="3" ry="2" fill="#5b96c6"/>
</g>
<circle r="40" fill="url(#avfade)"/>
</g></svg>
<div id="chan">PRIMAL EARTH</div>
<div id="subs">79.9K subscribers</div>
<div id="subbtn">Subscribe</div>
<!-- like/dislike -->
<div class="pill" style="left:1085px;width:272px"><span style="left:80px">3.5K</span><div class="abs" style="left:167px;top:11px;width:1.5px;height:49px;background:#d3d3d3"></div></div>
<svg style="left:1105px;top:1110px" width="45" height="45" viewBox="1105 1110 45 45" fill="none" stroke="#0f0f0f" stroke-width="2.200" stroke-linejoin="round"><path d="M1118 1130.500l10-14.300c1.800-1 4.800.3 4.200 3.300l-1.700 8.500h12.500c2.200 0 3.500 1.800 3 3.800l-3.200 13.400c-.5 2-2 3-4 3H1118z"/><path d="M1111 1130.500h7v17.200h-7z"/></svg>
<svg style="left:1278px;top:1110px" width="45" height="45" viewBox="1278 1110 45 45" fill="none" stroke="#0f0f0f" stroke-width="2.200" stroke-linejoin="round"><path d="M1311 1134.500l-10 14.300c-1.800 1-4.800-.3-4.200-3.300l1.700-8.500h-12.500c-2.200 0-3.500-1.800-3-3.800l3.200-13.400c.5-2 2-3 4-3H1311z"/><path d="M1311 1116.800h7v17.700h-7z"/></svg>
<!-- share -->
<div class="pill" style="left:1374px;width:183px"><span style="left:79px">Share</span></div>
<svg style="left:1395px;top:1110px" width="46" height="44" viewBox="1395 1110 46 44" fill="none" stroke="#0f0f0f" stroke-width="2.200" stroke-linejoin="round"><path d="M1421 1116l15.500 14.500-15.500 14.500v-8.600c-10-.3-16.500 2.700-21 10 1-11.500 7-20.500 21-22.200z"/></svg>
<!-- save -->
<div class="pill" style="left:1573.500px;width:173px"><span style="left:80px">Save</span></div>
<svg style="left:1595px;top:1112px" width="46" height="40" viewBox="1595 1112 46 40" fill="none" stroke="#0f0f0f" stroke-width="2.200"><path d="M1597.500 1121.500h19M1597.500 1130.500h19M1597.500 1139.500h12"/><path d="M1620.500 1131h17M1629 1122.500v17" stroke-width="3"/></svg>
<!-- more -->
<div class="pill" style="left:1762.500px;width:72px"></div>
<svg style="left:1780px;top:1125px" width="40" height="12" viewBox="1780 1125 40 12" fill="#0f0f0f"><circle cx="1785.200" cy="1131" r="2.600"/><circle cx="1798.200" cy="1131" r="2.600"/><circle cx="1811.200" cy="1131" r="2.600"/></svg>

<div id="menu">
<div class="hl"></div>
<div class="it" style="top:16.500px">Cut</div>
<div class="it" style="top:61px;color:#fff">Copy</div>
<div class="it" style="top:105.500px">Paste</div>
<div class="it" style="top:150px">Paste and Go</div>
<div class="sep"></div>
<div class="it" style="top:217px">Services</div>
<svg style="left:232px;top:220px" width="20" height="26" viewBox="0 0 20 26" fill="none" stroke="#1d1d1f" stroke-width="3" stroke-linecap="round" stroke-linejoin="round"><path d="M6 5.500l7.500 7.800-7.500 7.800"/></svg>
</div>
<!-- click indicator + hand cursor -->
<svg style="left:1195px;top:90px;z-index:60" width="90" height="110" viewBox="1195 90 90 110">
<circle cx="1228" cy="119.300" r="23.400" fill="#63a9a2"/>
<circle cx="1228" cy="119.300" r="20" fill="#a3cbd9"/>
<circle cx="1228" cy="119.300" r="16.800" fill="#8ccb8f"/>
<circle cx="1228" cy="119.300" r="12.600" fill="#b4dfae"/>
<circle cx="1228" cy="119.300" r="9.600" fill="#94cf86"/>
<g filter="drop-shadow(0 2px 2.500px rgba(0,0,0,.4))">
<path d="M1222.300 150V117.500a5.750 5.750 0 0 1 11.500 0V130.500c2.500-1.200 6.500-.5 8.900 3.200c2.200-2.400 6.800-1.600 9.200 2c2.600-1.800 7.600-.3 9 3.500c1.800 1.600 3.200 3 3.200 5V163.300c0 5.500-5 8.500-6.700 12.900l-1.200 9.600h-29.700l.2-5.500c-2-3.500-5-5.800-7.400-8.700c-2.800-3.400-4.600-7.300-6.400-11c-1.700-3.300-2.800-6.300-4.100-9.600c-.8-2 .3-4 2.200-4.800c2.200-.9 4.300-.4 6.300.200c2 .7 3.600 2.600 5 6.800z" fill="#fff" stroke="#141414" stroke-width="4" stroke-linejoin="round"/>
<path d="M1245 185.800l2.700-7.300 2.800 7.300" fill="none" stroke="#141414" stroke-width="3.600" stroke-linejoin="miter"/>
<path d="M1237.700 152.300v15.600M1245.500 152.300v15.600M1253.200 152.300v15.600" stroke="#141414" stroke-width="3.600" fill="none"/>
</g>
</svg>

</div>
<div id="frame"></div>
</body>
</html>
